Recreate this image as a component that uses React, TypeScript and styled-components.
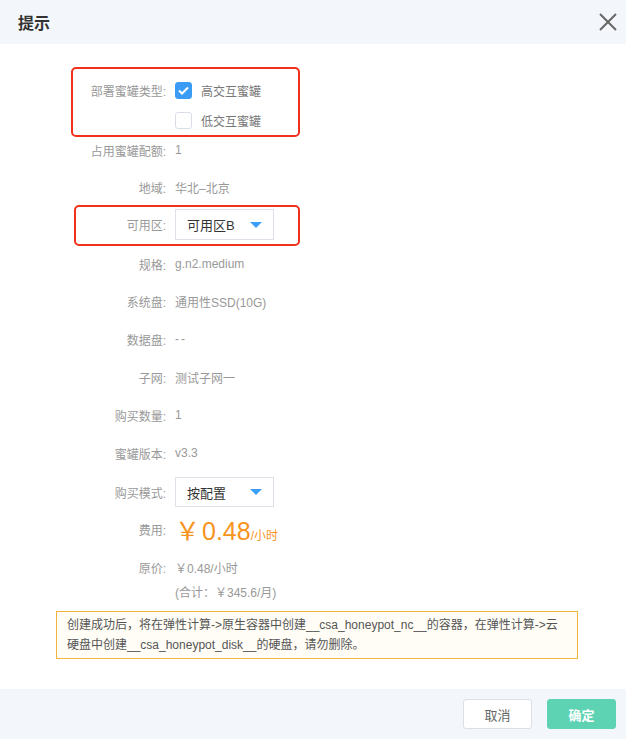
import styled, { createGlobalStyle } from 'styled-components'

const GlobalStyle = createGlobalStyle`
  html, body {
    margin: 0;
    padding: 0;
    background: #fff;
  }
  body {
    font-family: "Liberation Sans", "Noto Sans CJK SC", sans-serif;
  }
`;

type Frame = { left: number; width: number; top: number; bottom: number };

function App() {
  return (
    <Dialog>
      <GlobalStyle />
      <Header>
        <Title>提示</Title>
        <CloseButton aria-label="close">
          <svg width="20" height="20" viewBox="0 0 20 20">
            <path d="M2 2 L18 18 M18 2 L2 18" stroke="#666" strokeWidth="2" fill="none" />
          </svg>
        </CloseButton>
      </Header>

      <Body>
        <Highlight $frame={{ left: 15, width: 229, top: -13, bottom: -7 }}>
          <Row $mt={0} $h={20}>
            <Label>部署蜜罐类型:</Label>
            <Check $checked>
              <svg width="11" height="9" viewBox="0 0 11 9">
                <path d="M1 4.5 L4 7.5 L10 1.5" stroke="#fff" strokeWidth="2" fill="none" />
              </svg>
            </Check>
            <CheckText>高交互蜜罐</CheckText>
          </Row>
          <Row $mt={10} $h={20}>
            <Label />
            <Check />
            <CheckText>低交互蜜罐</CheckText>
          </Row>
        </Highlight>

        <Row $mt={10} $h={20}>
          <Label>占用蜜罐配额:</Label>
          <Value>1</Value>
        </Row>
        <Row $mt={17} $h={20}>
          <Label>地域:</Label>
          <Value>华北–北京</Value>
        </Row>

        <Highlight $frame={{ left: 18, width: 226, top: -4, bottom: -6 }} $mt={12}>
          <Row $mt={0} $h={31}>
            <Label>可用区:</Label>
            <Select>
              可用区B
              <Caret />
            </Select>
          </Row>
        </Highlight>

        <Row $mt={14} $h={20}>
          <Label>规格:</Label>
          <Value>g.n2.medium</Value>
        </Row>
        <Row $mt={17} $h={20}>
          <Label>系统盘:</Label>
          <Value>通用性SSD(10G)</Value>
        </Row>
        <Row $mt={18} $h={20}>
          <Label>数据盘:</Label>
          <Value $spaced>--</Value>
        </Row>
        <Row $mt={18} $h={20}>
          <Label>子网:</Label>
          <Value>测试子网一</Value>
        </Row>
        <Row $mt={18} $h={20}>
          <Label>购买数量:</Label>
          <Value>1</Value>
        </Row>
        <Row $mt={18} $h={20}>
          <Label>蜜罐版本:</Label>
          <Value>v3.3</Value>
        </Row>
        <Row $mt={14} $h={30}>
          <Label>购买模式:</Label>
          <Select>
            按配置
            <Caret />
          </Select>
        </Row>
        <Row $mt={8} $h={28}>
          <Label>费用:</Label>
          <Price>
            <Yen>￥</Yen>0.48<Unit>/小时</Unit>
          </Price>
        </Row>
        <Row $mt={14} $h={20}>
          <Label>原价:</Label>
          <Value>￥0.48/小时</Value>
        </Row>
        <Row $mt={4} $h={20}>
          <Label />
          <Value>(合计：￥345.6/月)</Value>
        </Row>

        <Notice>
          创建成功后，将在弹性计算-&gt;原生容器中创建__csa_honeypot_nc__的容器，在弹性计算-&gt;云
          <br />
          硬盘中创建__csa_honeypot_disk__的硬盘，请勿删除。
        </Notice>
      </Body>

      <Footer>
        <Button>取消</Button>
        <Button $primary>确定</Button>
      </Footer>
    </Dialog>
  )
}

const Dialog = styled.div`
  width: 626px;
  height: 739px;
  display: flex;
  flex-direction: column;
  background: #fff;
`;

const Header = styled.div`
  height: 44px;
  flex: none;
  background: #f3f6fa;
  display: flex;
  align-items: center;
  justify-content: space-between;
  padding: 0 8px 0 18px;
`;

const Title = styled.div`
  font-family: "Noto Sans CJK SC", sans-serif;
  font-size: 16px;
  font-weight: 700;
  color: #333;
`;

const CloseButton = styled.div`
  width: 20px;
  height: 20px;
  display: flex;
  align-items: center;
  justify-content: center;
`;

const Body = styled.div`
  flex: 1;
  display: flex;
  flex-direction: column;
  padding: 36px 48px 30px 56px;
`;

const Highlight = styled.div<{ $frame: Frame; $mt?: number }>`
  position: relative;
  margin-top: ${p => p.$mt ?? 0}px;

  &::before {
    content: '';
    position: absolute;
    left: ${p => p.$frame.left}px;
    width: ${p => p.$frame.width}px;
    top: ${p => p.$frame.top}px;
    bottom: ${p => p.$frame.bottom}px;
    border: 2px solid #f2311d;
    border-radius: 5px;
    box-sizing: border-box;
    pointer-events: none;
  }
`;

const Row = styled.div<{ $mt: number; $h: number }>`
  display: flex;
  align-items: center;
  height: ${p => p.$h}px;
  margin-top: ${p => p.$mt}px;
  font-size: 12px;
`;

const Label = styled.div`
  width: 110px;
  flex: none;
  text-align: right;
  color: #999;
  font-size: 12px;
  margin-right: 9px;
`;

const Value = styled.div<{ $spaced?: boolean }>`
  color: #999;
  font-size: 12px;
  letter-spacing: ${p => (p.$spaced ? '2px' : 'normal')};
`;

const Check = styled.div<{ $checked?: boolean }>`
  width: 17px;
  height: 17px;
  box-sizing: border-box;
  border-radius: 3px;
  border: 1px solid ${p => (p.$checked ? '#3b9cf6' : '#d9dee6')};
  background: ${p => (p.$checked ? '#3b9cf6' : '#fff')};
  display: flex;
  align-items: center;
  justify-content: center;
`;

const CheckText = styled.span`
  margin-left: 9px;
  color: #777;
  font-size: 12px;
`;

const Select = styled.div`
  width: 99px;
  height: 100%;
  box-sizing: border-box;
  border: 1px solid #dde2e9;
  display: flex;
  align-items: center;
  justify-content: space-between;
  padding: 0 11px 0 11px;
  font-size: 13px;
  color: #333;
`;

const Caret = styled.span`
  width: 0;
  height: 0;
  border-left: 6px solid transparent;
  border-right: 6px solid transparent;
  border-top: 6px solid #3a9ff5;
`;

const Price = styled.div`
  color: #f7941d;
  font-size: 25px;
  display: flex;
  align-items: baseline;
`;

const Yen = styled.span`
  margin-right: 2px;
`;

const Unit = styled.span`
  font-size: 12px;
`;

const Notice = styled.div`
  margin-top: 10px;
  border: 1px solid #f5b53a;
  background: #fffdf6;
  padding: 3px 10px;
  font-size: 12px;
  line-height: 20px;
  color: #555;
  white-space: nowrap;
`;

const Footer = styled.div`
  height: 50px;
  flex: none;
  background: #f3f6fa;
  display: flex;
  align-items: center;
  justify-content: flex-end;
  gap: 15px;
  padding-right: 10px;
`;

const Button = styled.div<{ $primary?: boolean }>`
  width: 69px;
  height: 30px;
  box-sizing: border-box;
  border-radius: 3px;
  display: flex;
  align-items: center;
  justify-content: center;
  font-size: 13px;
  background: ${p => (p.$primary ? '#5dd3b4' : '#fff')};
  color: ${p => (p.$primary ? '#fff' : '#666')};
  border: 1px solid ${p => (p.$primary ? '#5dd3b4' : '#dcdfe6')};
  font-weight: ${p => (p.$primary ? 700 : 400)};
`;

export default App
